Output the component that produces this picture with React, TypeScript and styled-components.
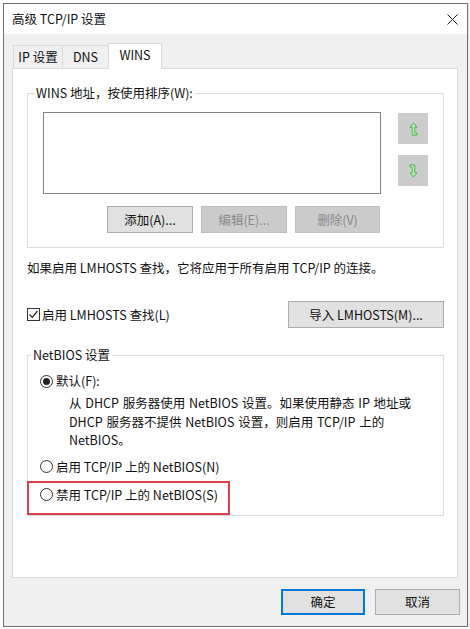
import React from "react";
import styled, { createGlobalStyle } from "styled-components";

const GlobalStyle = createGlobalStyle`
  html, body {
    margin: 0;
    padding: 0;
    background: #ffffff;
  }
  body {
    font-family: "Noto Sans CJK SC", "Noto Sans", sans-serif;
    font-size: 12.5px;
    color: #111111;
  }
`;

const descLines = [
  "从 DHCP 服务器使用 NetBIOS 设置。如果使用静态 IP 地址或",
  "DHCP 服务器不提供 NetBIOS 设置，则启用 TCP/IP 上的",
  "NetBIOS。",
];

const UpArrow = () => (
  <svg width="9" height="14" viewBox="0 0 10 16">
    <path
      d="M5 1 L9 6 L6.5 6 L6.5 12.5 L9 12.5 L9 15 L3.5 15 L3.5 6 L1 6 Z"
      fill="#b4e8b4"
      stroke="#43b043"
      strokeWidth="1"
      strokeLinejoin="round"
    />
  </svg>
);

const DownArrow = () => (
  <svg width="9" height="14" viewBox="0 0 10 16">
    <path
      d="M1 1 L6.5 1 L6.5 10 L9 10 L5 15 L1 10 L3.5 10 L3.5 3.5 L1 3.5 Z"
      fill="#b4e8b4"
      stroke="#43b043"
      strokeWidth="1"
      strokeLinejoin="round"
    />
  </svg>
);

const Radio = ({ checked }: { checked?: boolean }) => (
  <RadioCircle>{checked && <RadioDot />}</RadioCircle>
);

const App = () => {
  return (
    <>
      <GlobalStyle />
      <Window>
        <TitleBar>
          <Title>高级 TCP/IP 设置</Title>
          <svg width="11" height="11" viewBox="0 0 11 11">
            <path d="M0.5 0.5 L10.5 10.5 M10.5 0.5 L0.5 10.5" stroke="#222" strokeWidth="1" />
          </svg>
        </TitleBar>
        <Body>
          <TabStrip>
            <Tab $width={50}>IP 设置</Tab>
            <Tab $width={47}>DNS</Tab>
            <Tab $width={54} $active>
              WINS
            </Tab>
          </TabStrip>
          <Panel>
            <GroupBox>
              <Legend>WINS 地址，按使用排序(W):</Legend>
              <ListRow>
                <ListBox />
                <OrderButtons>
                  <OrderButton>
                    <UpArrow />
                  </OrderButton>
                  <OrderButton>
                    <DownArrow />
                  </OrderButton>
                </OrderButtons>
              </ListRow>
              <ListActions>
                <Button $width={86}>添加(A)...</Button>
                <Button $width={86} disabled>
                  编辑(E)...
                </Button>
                <Button $width={85} disabled>
                  删除(V)
                </Button>
              </ListActions>
            </GroupBox>

            <InfoText>如果启用 LMHOSTS 查找，它将应用于所有启用 TCP/IP 的连接。</InfoText>

            <LmhostsRow>
              <CheckLabel>
                <CheckBox>
                  <svg width="11" height="11" viewBox="0 0 11 11">
                    <path d="M1.5 5.5 L4.3 8.3 L9.5 2" fill="none" stroke="#222" strokeWidth="1.2" />
                  </svg>
                </CheckBox>
                启用 LMHOSTS 查找(L)
              </CheckLabel>
              <Button $width={156} $height={27}>
                导入 LMHOSTS(M)...
              </Button>
            </LmhostsRow>

            <NetbiosGroup>
              <Legend>NetBIOS 设置</Legend>
              <RadioRow>
                <Radio checked />
                默认(F):
              </RadioRow>
              <Description>
                {descLines.map((line) => (
                  <div key={line}>{line}</div>
                ))}
              </Description>
              <RadioRow $gap={9}>
                <Radio />
                启用 TCP/IP 上的 NetBIOS(N)
              </RadioRow>
              <Highlight>
                <RadioRow>
                  <Radio />
                  禁用 TCP/IP 上的 NetBIOS(S)
                </RadioRow>
              </Highlight>
            </NetbiosGroup>
          </Panel>
          <Footer>
            <Button $width={84} $height={26} $primary>
              确定
            </Button>
            <Button $width={85} $height={26}>
              取消
            </Button>
          </Footer>
        </Body>
      </Window>
    </>
  );
};

const Window = styled.div`
  box-sizing: border-box;
  margin: 3px 0 0 3px;
  width: 465px;
  height: 624px;
  border: 1px solid #707070;
  display: flex;
  flex-direction: column;
  box-shadow: 1px 1px 2px rgba(0, 0, 0, 0.15);
`;

const TitleBar = styled.div`
  height: 30px;
  background: #ffffff;
  display: flex;
  align-items: center;
  justify-content: space-between;
  padding: 0 9px 0 8px;
`;

const Title = styled.span`
  line-height: 16px;
`;

const Body = styled.div`
  flex: 1;
  background: #f0f0f0;
  padding: 9px 9px 0 8px;
  display: flex;
  flex-direction: column;
`;

const TabStrip = styled.div`
  height: 25px;
  display: flex;
  align-items: flex-end;
  padding-left: 1px;
`;

const Tab = styled.div<{ $width: number; $active?: boolean }>`
  box-sizing: border-box;
  width: ${(p) => p.$width}px;
  height: ${(p) => (p.$active ? 26 : 23)}px;
  margin-left: -1px;
  margin-bottom: ${(p) => (p.$active ? -1 : 0)}px;
  border: 1px solid #d9d9d9;
  border-bottom: none;
  background: ${(p) => (p.$active ? "#ffffff" : "#f0f0f0")};
  display: flex;
  align-items: center;
  justify-content: center;
  padding-bottom: ${(p) => (p.$active ? 3 : 0)}px;
  line-height: 16px;
  position: relative;
  z-index: ${(p) => (p.$active ? 1 : 0)};
  &:first-child {
    margin-left: 0;
  }
`;

const Panel = styled.div`
  box-sizing: border-box;
  height: 510px;
  background: #ffffff;
  border: 1px solid #d9d9d9;
  padding: 16px 13px 0 14px;
`;

const GroupBox = styled.fieldset`
  box-sizing: border-box;
  width: 417px;
  margin: 0;
  padding: 11px 14px 14px 15px;
  border: 1px solid #dcdcdc;
  min-width: 0;
`;

const Legend = styled.legend`
  padding: 0 2px;
  margin-left: -9px;
  line-height: 16px;
  color: #111111;
`;

const ListRow = styled.div`
  display: flex;
  align-items: flex-start;
`;

const ListBox = styled.div`
  box-sizing: border-box;
  width: 338px;
  height: 82px;
  border: 1px solid #828282;
  background: #ffffff;
`;

const OrderButtons = styled.div`
  display: flex;
  flex-direction: column;
  gap: 11px;
  margin-left: 17px;
  margin-top: 1px;
`;

const OrderButton = styled.div`
  width: 30px;
  height: 31px;
  background: #cccccc;
  display: flex;
  align-items: center;
  justify-content: center;
`;

const ListActions = styled.div`
  width: 337px;
  display: flex;
  justify-content: flex-end;
  gap: 8px;
  margin-top: 12px;
`;

const Button = styled.button<{ $width: number; $height?: number; $primary?: boolean }>`
  box-sizing: border-box;
  width: ${(p) => p.$width}px;
  height: ${(p) => p.$height ?? 27}px;
  padding: 0;
  font: inherit;
  line-height: 16px;
  color: #111111;
  background: #e1e1e1;
  border: ${(p) => (p.$primary ? "2px solid #0078d7" : "1px solid #adadad")};
  &:disabled {
    background: #cccccc;
    border-color: #bfbfbf;
    color: #8a8a8a;
  }
`;

const InfoText = styled.div`
  margin-top: 12px;
  line-height: 16px;
  white-space: nowrap;
`;

const LmhostsRow = styled.div`
  width: 417px;
  margin-top: 25px;
  display: flex;
  align-items: center;
  justify-content: space-between;
`;

const CheckLabel = styled.label`
  display: flex;
  align-items: center;
  gap: 2px;
  line-height: 16px;
`;

const CheckBox = styled.span`
  box-sizing: border-box;
  width: 13px;
  height: 13px;
  border: 1px solid #333333;
  background: #ffffff;
  display: flex;
  align-items: center;
  justify-content: center;
`;

const NetbiosGroup = styled(GroupBox)`
  margin-top: 19px;
  padding: 10px 14px 0 12px;
`;

const RadioRow = styled.div<{ $gap?: number }>`
  display: flex;
  align-items: center;
  gap: 3px;
  line-height: 16px;
  margin-top: ${(p) => p.$gap ?? 0}px;
  white-space: nowrap;
`;

const RadioCircle = styled.span`
  box-sizing: border-box;
  width: 13px;
  height: 13px;
  border: 1px solid #333333;
  border-radius: 50%;
  background: #ffffff;
  display: flex;
  align-items: center;
  justify-content: center;
`;

const RadioDot = styled.span`
  width: 7px;
  height: 7px;
  border-radius: 50%;
  background: #222222;
`;

const Description = styled.div`
  margin: 5px 0 0 29px;
  line-height: 18.5px;
  white-space: nowrap;
  word-spacing: 1px;
`;

const Highlight = styled.div`
  box-sizing: border-box;
  width: 203px;
  height: 34px;
  margin: 6px 0 0 -13px;
  padding: 4px 0 0 11px;
  border: 2px solid #d8424b;
`;

const Footer = styled.div`
  display: flex;
  justify-content: flex-end;
  gap: 10px;
  margin: 11px -2px 0 0;
`;

export default App;
